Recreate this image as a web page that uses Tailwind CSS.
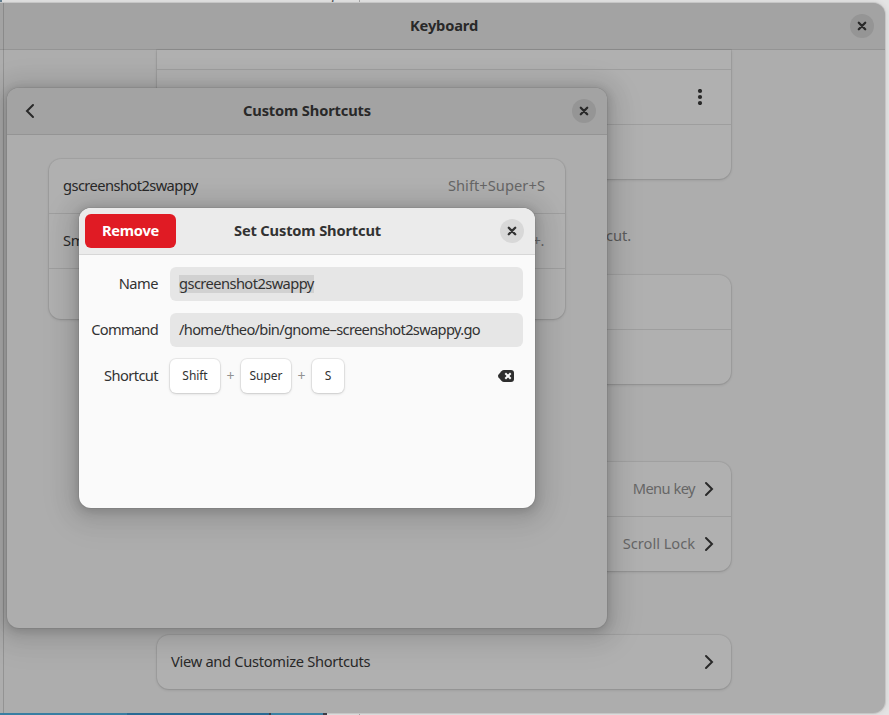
<!DOCTYPE html>
<html lang="en">
<head>
<meta charset="utf-8">
<title>Keyboard</title>
<script src="https://cdn.jsdelivr.net/npm/@tailwindcss/browser@4"></script>
</head>
<body class="relative w-[889px] h-[715px] overflow-hidden bg-[#e4e4e4] font-['Noto_Sans',sans-serif] antialiased text-[14.67px] leading-5 tracking-[-0.4px] text-[#292929]">
<svg width="0" height="0" class="absolute">
  <symbol id="close" viewBox="0 0 16 16"><path d="M4.8 4.8 11.2 11.2M11.2 4.8 4.8 11.2" fill="none" stroke="currentColor" stroke-width="2.3" stroke-linecap="round"/></symbol>
  <symbol id="next" viewBox="0 0 16 16"><path d="M5 2 11 8 5 14" fill="none" stroke="currentColor" stroke-width="2" stroke-linecap="round" stroke-linejoin="miter"/></symbol>
</svg>

<!-- Desktop behind the windows -->
<div class="absolute left-[326px] -top-[15px] text-[14px] text-[#555]">g</div>
<div class="absolute left-0 top-0 w-[2px] h-[3px] bg-[#668395]"></div>
<div class="absolute left-[359px] top-0 w-px h-[715px] bg-[#aaa]"></div>

<!-- Keyboard settings window -->
<main class="absolute -left-[20px] top-[3px] w-[905px] h-[710px] rounded-xl overflow-hidden bg-[#adadad] shadow-[0_0_0_1px_#c6c6c6,0_0_6px_rgba(0,0,0,0.12)] flex flex-col">
  <header class="h-[47px] shrink-0 border-b border-[#949494] bg-[#a3a3a3] flex items-center pr-[11px] pl-[430px]">
    <h1 class="font-bold grow pb-[2px] tracking-[-0.15px]">Keyboard</h1>
    <button class="size-6 rounded-full bg-[#959595] flex items-center justify-center"><svg class="size-4"><use href="#close"/></svg></button>
  </header>
  <div class="w-[574px] ml-[177px] flex flex-col">
    <section class="h-[129px] rounded-b-xl bg-[#b0b0b0] shadow-[0_0_0_1px_rgba(0,0,0,0.05),0_1px_3px_rgba(0,0,0,0.15)]">
      <div class="h-5 border-b border-[#9e9e9e]"></div>
      <div class="h-[55px] border-b border-[#9e9e9e] flex items-center justify-end pr-[23px]"><svg class="size-4" viewBox="0 0 16 16" fill="currentColor"><circle cx="8" cy="2" r="2.1"/><circle cx="8" cy="8" r="2.1"/><circle cx="8" cy="14" r="2.1"/></svg></div>
    </section>
    <p class="mt-[46px] h-5 pr-[100px] text-right tracking-[-0.1px] text-[#5c5c5c]">tcut.</p>
    <section class="mt-[30px] h-[109px] rounded-xl bg-[#b0b0b0] shadow-[0_0_0_1px_rgba(0,0,0,0.05),0_1px_3px_rgba(0,0,0,0.15)]"><div class="h-[55px] border-b border-[#9e9e9e]"></div></section>
    <section class="mt-[78px] h-[109px] rounded-xl bg-[#b0b0b0] shadow-[0_0_0_1px_rgba(0,0,0,0.05),0_1px_3px_rgba(0,0,0,0.15)]">
      <div class="h-[55px] border-b border-[#9e9e9e] flex items-center justify-end pr-[14px] gap-[6px]"><span class="text-[#666] pb-[2px] tracking-[-0.55px]">Menu key</span><svg class="size-4"><use href="#next"/></svg></div>
      <div class="h-[54px] flex items-center justify-end pr-[14px] gap-[6px]"><span class="text-[#666] pb-[2px] tracking-[-0.03px]">Scroll Lock</span><svg class="size-4"><use href="#next"/></svg></div>
    </section>
    <section class="mt-16 h-[54px] rounded-xl bg-[#b0b0b0] shadow-[0_0_0_1px_rgba(0,0,0,0.05),0_1px_3px_rgba(0,0,0,0.15)] flex items-center justify-between px-[14px]"><span class="pb-[2px] tracking-[-0.3px]">View and Customize Shortcuts</span><svg class="size-4"><use href="#next"/></svg></section>
  </div>
</main>
<div class="absolute left-[3px] top-[3px] w-px h-[710px] bg-black/15"></div>
<div class="absolute left-0 bottom-0 h-[2px] w-[327px] flex">
  <div class="w-[127px] bg-[#397ea2]"></div><div class="w-[142px] bg-[#296a94]"></div><div class="w-[2px] bg-[#39404c]"></div><div class="w-[52px] bg-[#3b81a4]"></div><div class="w-[4px] bg-[#3c3c46]"></div>
</div>

<!-- Custom shortcuts dialog -->
<section class="absolute left-[7px] top-[88px] w-[600px] h-[540px] rounded-xl bg-[#adadad] shadow-[0_0_0_1px_rgba(0,0,0,0.05),0_2px_8px_2px_rgba(0,0,0,0.13),0_3px_20px_10px_rgba(0,0,0,0.09),0_6px_32px_16px_rgba(0,0,0,0.04)]">
  <header class="h-[47px] rounded-t-xl border-b border-[#949494] bg-[#a3a3a3] flex items-center pl-[15px] pr-[11px]">
    <svg class="size-4"><use href="#next" transform="rotate(180 8 8)"/></svg>
    <h2 class="font-bold grow pl-[205px] pb-[2px] tracking-[-0.15px]">Custom Shortcuts</h2>
    <button class="size-6 rounded-full bg-[#959595] flex items-center justify-center"><svg class="size-4"><use href="#close"/></svg></button>
  </header>
  <div class="mx-[42px] mt-6 h-[160px] rounded-xl bg-[#b0b0b0] shadow-[0_0_0_1px_rgba(0,0,0,0.05),0_1px_3px_rgba(0,0,0,0.15)]">
    <div class="h-[55px] border-b border-[#9e9e9e] flex items-center justify-between pl-[14px] pr-5 pb-[2px]"><span class="tracking-[-0.57px]">gscreenshot2swappy</span><span class="text-[#666] tracking-[0.05px]">Shift+Super+S</span></div>
    <div class="h-[55px] border-b border-[#9e9e9e] flex items-center justify-between pl-[14px] pr-[21px] pb-[2px]"><span>Sm</span><span class="text-[#666]">+.</span></div>
  </div>
</section>

<!-- Shortcut editor -->
<section class="absolute left-[79px] top-[208px] w-[456px] h-[300px] rounded-xl bg-[#fafafa] text-[#323232] shadow-[0_0_0_1px_rgba(0,0,0,0.05),0_2px_8px_2px_rgba(0,0,0,0.13),0_3px_20px_10px_rgba(0,0,0,0.09),0_6px_32px_16px_rgba(0,0,0,0.04)]">
  <header class="h-[47px] rounded-t-xl border-b border-[#d7d7d7] bg-[#ebebeb] flex items-center pl-[6px] pr-[11px]">
    <button class="w-[91px] h-[34px] rounded-md bg-[#e01b24] text-white font-bold pb-[2px] tracking-[-0.25px]">Remove</button>
    <h2 class="font-bold grow pl-[58px] pb-[2px] tracking-[-0.16px]">Set Custom Shortcut</h2>
    <button class="size-6 rounded-full bg-[#d8d8d8] flex items-center justify-center"><svg class="size-4"><use href="#close"/></svg></button>
  </header>
  <div class="grid grid-cols-[67px_353px] gap-3 p-3 items-center auto-rows-[34px]">
    <label class="text-right pb-[2px] tracking-[-0.5px]">Name</label>
    <div class="h-[34px] rounded-md bg-[#e6e6e6] px-[9px] flex items-center"><span class="h-[18px] leading-4 bg-[#d1d1d1] tracking-[-0.57px]">gscreenshot2swappy</span></div>
    <label class="text-right pb-[2px] tracking-[-0.72px]">Command</label>
    <div class="h-[34px] rounded-md bg-[#e6e6e6] px-[9px] pb-[2px] flex items-center tracking-[-0.67px]">/home/theo/bin/gnome–screenshot2swappy.go</div>
    <label class="text-right pb-[2px] tracking-[-0.6px]">Shortcut</label>
    <div class="flex items-center text-[12px] tracking-[-0.05px]">
      <kbd class="font-['Noto_Sans',sans-serif] w-[50px] h-[34px] rounded-md bg-white shadow-[0_0_0_1px_rgba(0,0,0,0.06),0_1px_3px_rgba(0,0,0,0.15)] flex items-center justify-center">Shift</kbd>
      <span class="w-[21px] text-center text-[14px] text-[#929292]">+</span>
      <kbd class="font-['Noto_Sans',sans-serif] w-[50px] h-[34px] rounded-md bg-white shadow-[0_0_0_1px_rgba(0,0,0,0.06),0_1px_3px_rgba(0,0,0,0.15)] flex items-center justify-center">Super</kbd>
      <span class="w-[21px] text-center text-[14px] text-[#929292]">+</span>
      <kbd class="font-['Noto_Sans',sans-serif] w-8 h-[34px] rounded-md bg-white shadow-[0_0_0_1px_rgba(0,0,0,0.06),0_1px_3px_rgba(0,0,0,0.15)] flex items-center justify-center">S</kbd>
      <svg class="w-4 h-3 ml-auto mr-[9px]" viewBox="0 0 16 12"><path d="M6 0H13Q16 0 16 3V9Q16 12 13 12H6Q4.6 12 3.4 10.8L.4 7.2Q-.4 6 .4 4.8L3.4 1.2Q4.6 0 6 0Z" fill="#2e2e2e"/><path d="M8 4 12 8M12 4 8 8" stroke="#fafafa" stroke-width="2" stroke-linecap="square"/></svg>
    </div>
  </div>
</section>
</body>
</html>
